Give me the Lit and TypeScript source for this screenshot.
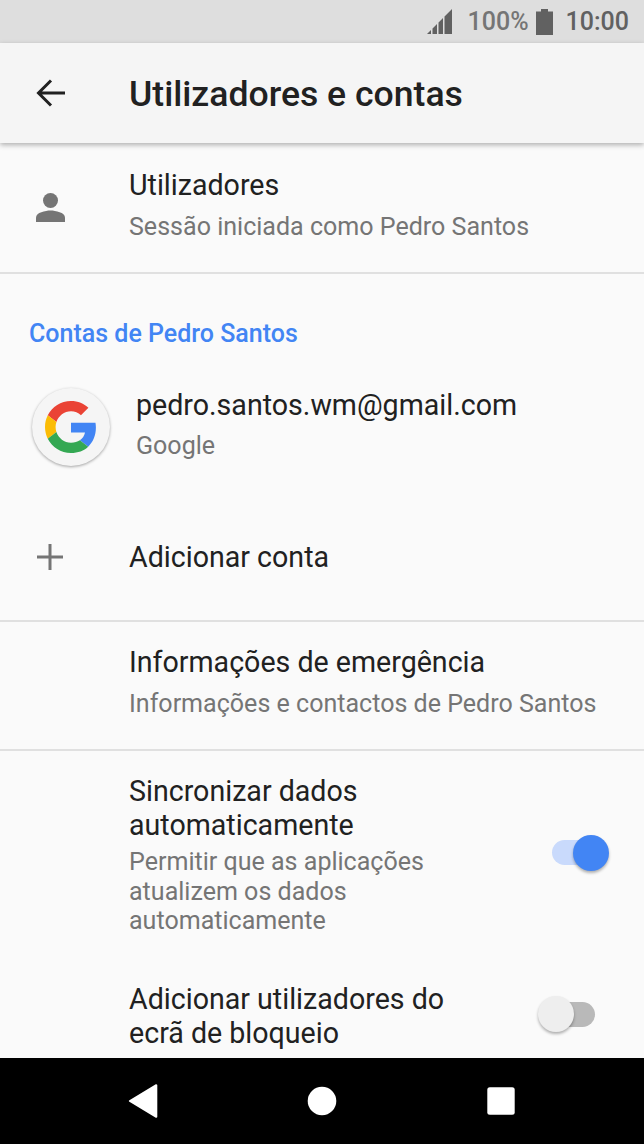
import { LitElement, html, css } from "lit";
import { customElement } from "lit/decorators.js";

@customElement("app-root")
export class AppRoot extends LitElement {
  static styles = css`
    :host {
      display: flex;
      flex-direction: column;
      width: 644px;
      height: 1144px;
      overflow: hidden;
      background: #fafafa;
      font-family: Roboto, sans-serif;
      color: #212121;
    }

    /* barra de estado */
    .status {
      height: 43px;
      flex: none;
      display: flex;
      align-items: center;
      justify-content: flex-end;
      padding-right: 15px;
      background: #dedede;
      font-size: 25px;
      font-weight: 500;
      color: #757575;
    }
    .status svg { display: block; }
    .signal { margin-right: 15px; }
    .battery { margin: 0 13px 0 7px; }
    .clock { color: #616161; }

    .toolbar {
      height: 100px;
      flex: none;
      display: flex;
      align-items: center;
      background: #f5f5f5;
      box-shadow: 0 2px 5px rgba(0, 0, 0, 0.3);
      position: relative;
      z-index: 1;
    }
    .toolbar .lead {
      width: 129px;
      flex: none;
      padding-left: 36px;
      box-sizing: border-box;
    }
    .toolbar h1 {
      margin: 1px 0 0;
      font-size: 35.6px;
      font-weight: 500;
    }

    .list {
      flex: 1;
      min-height: 0;
      overflow: hidden;
    }

    .row {
      display: flex;
      align-items: center;
    }
    .lead { width: 129px; flex: none; box-sizing: border-box; }
    .lead svg { display: block; }
    .body { flex: 1; min-width: 0; }
    .title { font-size: 28.6px; line-height: 34px; }
    .sub { font-size: 25.05px; line-height: 29.5px; color: #757575; margin-top: 9px; }

    /* titulos uma linha acima do centro da fila */
    .users .title,
    .emergency .title,
    .sync .title,
    .lock .title { margin-top: -1px; }
    .users .sub,
    .emergency .sub { margin-top: 10px; }
    .sync .sub { margin-top: 5px; }

    .users { height: 125px; padding-bottom: 4px; border-bottom: 2px solid #e0e0e0; }
    .users .lead { padding-left: 36px; margin-top: 4px; }

    .section {
      padding: 45px 0 0 29px;
      height: 60px;
      font-size: 25px;
      line-height: 30px;
      font-weight: 500;
      color: #4285f4;
    }

    .account { height: 94px; margin-top: -2px; }
    .account .lead { width: 136px; padding-left: 32px; margin-top: 6px; }
    .avatar {
      width: 78px;
      height: 78px;
      border-radius: 50%;
      background: #f5f5f5;
      box-shadow: 0 1px 3px rgba(0, 0, 0, 0.35);
      display: flex;
      align-items: center;
      justify-content: center;
    }

    .add { height: 110px; margin-top: 31px; border-bottom: 2px solid #e0e0e0; padding-bottom: 8px; }
    .add .lead { padding-left: 37px; }

    .emergency { height: 121px; padding-bottom: 6px; border-bottom: 2px solid #e0e0e0; }

    .toggle-row { align-items: center; padding-right: 49px; }
    .toggle-row .body { padding-right: 30px; }
    .sync { padding-top: 24px; padding-bottom: 23px; }
    .sync .switch { margin-top: -5px; }
    .lock { padding-top: 24px; }
    .lock .switch { margin-top: -4px; }

    .switch {
      position: relative;
      width: 43px;
      height: 25px;
      flex: none;
      border-radius: 13px;
    }
    .switch i {
      position: absolute;
      top: -5.5px;
      width: 36px;
      height: 36px;
      border-radius: 50%;
      box-shadow: 0 2px 3px rgba(0, 0, 0, 0.3);
    }
    .switch.on { background: #c9dafc; }
    .switch.on i { right: -14px; background: #4285f4; }
    .switch.off { background: #b9b9b9; }
    .switch.off i { left: -14px; background: #eeeeee; }

    .nav {
      height: 86px;
      flex: none;
      background: #000;
      position: relative;
      z-index: 1;
      padding-left: 53.5px;
      display: grid;
      grid-template-columns: repeat(3, 179px);
      justify-content: start;
      align-items: center;
      justify-items: center;
    }
    .nav svg { display: block; }
  `;

  render() {
    return html`
      <div class="status">
        <svg class="signal" width="26" height="25" viewBox="0 0 26 25" fill="#616161">
          <path d="M0 25 L4 21 V25 Z M5.5 25 V19.5 L10 15 V25 Z M11.5 25 V13.5 L16 9 V25 Z M17.5 25 V7.5 L25 0 V25 Z" />
        </svg>
        <span>100%</span>
        <svg class="battery" width="17" height="26" viewBox="0 0 17 26" fill="#616161">
          <path d="M5 0 H12 V2.5 H17 V26 H0 V2.5 H5 Z" />
        </svg>
        <span class="clock">10:00</span>
      </div>

      <div class="toolbar">
        <div class="lead">
          <svg width="30" height="28" viewBox="0 0 30 28" fill="none" stroke="#212121" stroke-width="3">
            <path d="M29 14 H3 M15 1.5 L2.5 14 L15 26.5" />
          </svg>
        </div>
        <h1>Utilizadores e contas</h1>
      </div>

      <div class="list">
        <div class="row users">
          <div class="lead">
            <svg width="29" height="29" viewBox="0 0 29 29" fill="#757575">
              <circle cx="14.5" cy="7.5" r="7.5" />
              <path d="M0 29 V24.5 C0 19.5 9.5 17.5 14.5 17.5 S29 19.5 29 24.5 V29 Z" />
            </svg>
          </div>
          <div class="body">
            <div class="title">Utilizadores</div>
            <div class="sub">Sessão iniciada como Pedro Santos</div>
          </div>
        </div>

        <div class="section">Contas de Pedro Santos</div>

        <div class="row account">
          <div class="lead">
            <div class="avatar">
              <svg width="52" height="52" viewBox="0 0 48 48">
                <path fill="#ea4335" d="M24 9.5c3.54 0 6.71 1.22 9.21 3.6l6.85-6.85C35.9 2.38 30.47 0 24 0 14.62 0 6.51 5.38 2.56 13.22l7.98 6.19C12.43 13.72 17.74 9.5 24 9.5z" />
                <path fill="#4285f4" d="M46.98 24.55c0-1.57-.15-3.09-.38-4.55H24v9.02h12.94c-.58 2.96-2.26 5.48-4.78 7.18l7.73 6c4.51-4.18 7.09-10.36 7.09-17.65z" />
                <path fill="#fbbc05" d="M10.53 28.59c-.48-1.45-.76-2.99-.76-4.59s.27-3.14.76-4.59l-7.98-6.19C.92 16.46 0 20.12 0 24c0 3.88.92 7.54 2.56 10.78l7.97-6.19z" />
                <path fill="#34a853" d="M24 48c6.48 0 11.93-2.13 15.89-5.81l-7.73-6c-2.15 1.45-4.92 2.3-8.16 2.3-6.26 0-11.57-4.22-13.47-9.91l-7.98 6.19C6.51 42.62 14.62 48 24 48z" />
              </svg>
            </div>
          </div>
          <div class="body">
            <div class="title">pedro.santos.wm@gmail.com</div>
            <div class="sub">Google</div>
          </div>
        </div>

        <div class="row add">
          <div class="lead">
            <svg width="26" height="26" viewBox="0 0 26 26" fill="#757575">
              <path d="M11.5 0 H14.5 V11.5 H26 V14.5 H14.5 V26 H11.5 V14.5 H0 V11.5 H11.5 Z" />
            </svg>
          </div>
          <div class="body"><div class="title">Adicionar conta</div></div>
        </div>

        <div class="row emergency">
          <div class="lead"></div>
          <div class="body">
            <div class="title">Informações de emergência</div>
            <div class="sub">Informações e contactos de Pedro Santos</div>
          </div>
        </div>

        <div class="row toggle-row sync">
          <div class="lead"></div>
          <div class="body">
            <div class="title">Sincronizar dados<br />automaticamente</div>
            <div class="sub">Permitir que as aplicações<br />atualizem os dados<br />automaticamente</div>
          </div>
          <div class="switch on"><i></i></div>
        </div>

        <div class="row toggle-row lock">
          <div class="lead"></div>
          <div class="body">
            <div class="title">Adicionar utilizadores do<br />ecrã de bloqueio</div>
          </div>
          <div class="switch off"><i></i></div>
        </div>
      </div>

      <div class="nav">
        <svg width="30" height="34" viewBox="0 0 30 34" fill="#fff" stroke="#fff" stroke-width="2" stroke-linejoin="round">
          <path d="M1.9 17 L28.3 1.2 V32.8 Z" />
        </svg>
        <svg width="30" height="30" viewBox="0 0 30 30" fill="#fff"><circle cx="15" cy="15" r="14.3" /></svg>
        <svg width="30" height="30" viewBox="0 0 30 30" fill="#fff"><rect x="1.3" y="1.3" width="27.4" height="27.4" rx="2.5" /></svg>
      </div>
    `;
  }
}
